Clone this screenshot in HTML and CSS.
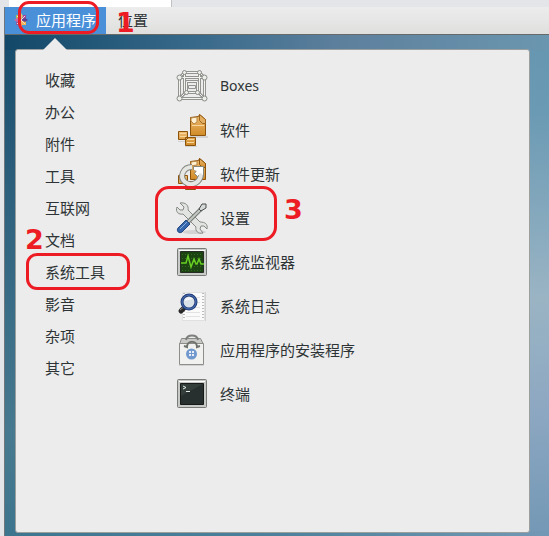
FILE: index.html
```
<!DOCTYPE html>
<html lang="zh-CN">
<head>
<meta charset="utf-8">
<title>应用程序</title>
<link rel="stylesheet" href="styles.css">
</head>
<body>
<div class="tabs"><div class="tab"></div></div>
<div class="desktop">
  <header class="topbar">
    <button class="menu menu-active marked" type="button">
      <svg class="logo" viewBox="0 0 14 14" aria-hidden="true">
        <path fill="#a9bc57" d="M2 2h5v5H2z"/><path fill="#a0479b" d="M7 2h5v5H7z"/>
        <path fill="#f3b64c" d="M7 7h5v5H7z"/><path fill="#8d5a9f" d="M2 7h5v5H2z"/>
        <path fill="#cfd27d" d="M7 0l2 3-2 4-2-4z"/><path fill="#c66aa4" d="M0 7l3-2 4 2-4 2z"/>
        <path fill="#5b418f" d="M14 7l-3-2-4 2 4 2z"/><path fill="#efb565" d="M7 14l2-3-2-4-2 4z"/>
        <path stroke="#e9d9dc" d="M3 3l8 8M11 3l-8 8"/>
      </svg>
      <span>应用程序</span>
      <span class="frame frame-one"></span>
    </button>
    <button class="menu places marked" type="button">位置<b class="number number-one">1</b></button>
  </header>
  <main class="panel">
    <nav class="categories">
      <button type="button">收藏</button>
      <button type="button">办公</button>
      <button type="button">附件</button>
      <button type="button">工具</button>
      <button type="button">互联网</button>
      <button type="button">文档</button>
      <button class="marked" type="button">系统工具<span class="frame frame-two"></span><b class="number number-two">2</b></button>
      <button type="button">影音</button>
      <button type="button">杂项</button>
      <button type="button">其它</button>
    </nav>
    <section class="apps">
      <button class="latin" type="button">
        <svg viewBox="0 0 32 32" aria-hidden="true">
          <g fill="none" stroke="#92958f" stroke-width="3"><path d="M3.500 7.500h25v21h-25zM8.500 2.500h15M3.500 7.500l5-5M28.500 7.500l-5-5M3.500 28.500l6-6M28.500 28.500l-6-6M10.500 11.500h11v11h-11zM8.500 3v20M23.500 3v20"/></g>
          <g fill="none" stroke="#f2f3f0" stroke-width="1"><path d="M3.500 7.500h25v21h-25zM8.500 2.500h15M3.500 7.500l5-5M28.500 7.500l-5-5M3.500 28.500l6-6M28.500 28.500l-6-6M10.500 11.500h11v11h-11zM8.500 3v20M23.500 3v20"/></g>
          <path d="M12.500 15.500h7v3h-7z" fill="#eee" stroke="#92958f"/>
          <g fill="#eceee9" stroke="#898c86"><circle cx="3.500" cy="7.500" r="2.500"/><circle cx="28.500" cy="7.500" r="2.500"/><circle cx="3.500" cy="28.500" r="2.500"/><circle cx="28.500" cy="28.500" r="2.500"/><circle cx="8.500" cy="2.500" r="2"/><circle cx="23.500" cy="2.500" r="2"/><circle cx="10.500" cy="22.500" r="2"/><circle cx="21.500" cy="22.500" r="2"/></g>
        </svg>Boxes
      </button>
      <button type="button">
        <svg viewBox="0 0 32 32" aria-hidden="true">
          <defs><linearGradient id="gold" x2="0" y2="1"><stop stop-color="#efbd73"/><stop offset="1" stop-color="#d18b28"/></linearGradient></defs>
          <path fill="#d2d2d2" d="M14 22h18v2H14zM2 27h8v1H2zM9 33h12v-1H9z"/>
          <g stroke="#8b530b" fill="url(#gold)"><path d="M14.500 3.500l8-1 1-2 6 5v16h-15z"/><path d="M2.500 17.500h9v8h-9zM9.500 23.500h10v8h-10z"/></g>
          <path fill="#fff0d1" stroke="#b78543" d="M15 4l6-1v5l-3 2-3-3z"/><path fill="#e3ae61" stroke="#9b641d" d="M23.500 0.500l6 5v4h-3l-3-3z"/>
          <path stroke="#f9d69e" d="M16 11.500h12M4 19.500h6M4 22.500h6M11 25.500h7M11 28.500h7"/>
        </svg>软件
      </button>
      <button type="button">
        <svg viewBox="0 0 32 32" aria-hidden="true">
          <g stroke="#8b530b" fill="url(#gold)"><path d="M14.500 3.500l8-1 1-2 6 5v16h-15z"/><path d="M2.500 17.500h9v8h-9zM9.500 23.500h10v8h-10z"/><path d="M23.500 0.500l6 5v4h-3l-3-3z"/></g>
          <path fill="#fff0d1" stroke="#b78543" d="M15 4l6-1v4l-6 1z"/>
          <path fill="none" stroke="#85877f" stroke-width="6" d="M16 9c-9 0-13 10-7 15s16 1 16-9"/>
          <path fill="#fff" stroke="#85877f" d="M17.500 8.500h10v10l-3-3-3 3-3-3 2-3-3-1z"/>
          <path fill="none" stroke="#e6e7e3" stroke-width="4" d="M16 9c-9 0-13 10-7 15s16 1 16-9"/>
          <path fill="#fff" d="M18 9h9v8l-2-2-3 1-1-3-3-1z"/>
        </svg>软件更新
      </button>
      <button class="marked" type="button">
        <svg viewBox="0 0 32 32" aria-hidden="true">
          <ellipse cx="18" cy="30" rx="12" ry="2" fill="#d3d3d3"/>
          <path fill="#e2e4e1" stroke="#858984" d="M4 1l4 4-1 3-3 0-3-3c-2 5 2 8 6 7l13 13c-1 4 2 7 7 6l-3-4 1-3 3 0 3 3c1-5-2-7-7-7L12 8c1-4-2-8-8-7z"/>
          <path stroke="#747873" stroke-width="4" d="M12 20L25 7"/><path stroke="#c4c8c5" stroke-width="2" d="M12 20L25 7"/>
          <path fill="#d5d9d7" stroke="#484c4b" d="M23 7l3-5 4 0v4l-5 3z"/>
          <path fill="#3566ab" stroke="#234781" d="M10 18l4 4-8 8c-3 2-6-1-4-4z"/><path stroke="#87afe0" stroke-width="1" d="M4 27l7-7"/>
        </svg>设置
        <span class="frame frame-three"></span><b class="number number-three">3</b>
      </button>
      <button type="button">
        <svg viewBox="0 0 32 32" aria-hidden="true">
          <rect x="1.500" y="2.500" width="29" height="27" rx="1" fill="#c9cbc9" stroke="#777a77"/><path stroke="#fff" d="M3 4.500h26"/>
          <path fill="#1b4412" stroke="#242c23" d="M4.500 5.500h23v21h-23z"/>
          <path fill="none" stroke="#356622" stroke-dasharray="1 2" d="M6 8.500h20M6 12.500h20M6 20.500h20M6 24.500h20"/>
          <path fill="none" stroke="#68ce24" stroke-width="1.500" d="M5 17h5l2-7 3 11 3-8 2 5h1l2-5 2 5h3"/>
        </svg>系统监视器
      </button>
      <button type="button">
        <svg viewBox="0 0 32 32" aria-hidden="true">
          <path fill="#d2d2d2" d="M29 2h1v29h-1z"/><path fill="#fafafa" stroke="#e0e0e0" d="M6.500 2.500h22v28h-22z"/><path stroke="#bbb" stroke-width="2" stroke-dasharray="1 2" d="M8 3v27M27 3v27"/>
          <path stroke="#e2e2e2" d="M10 7.500h14M10 12.500h14M10 17.500h14M10 22.500h14M10 26.500h14"/>
          <path stroke="#272827" stroke-width="5" stroke-linecap="round" d="M5 21l4-4"/><path stroke="#888" d="M4 20l5-4"/>
          <circle cx="13" cy="12" r="7" fill="#d9e0e8" stroke="#213b78" stroke-width="3"/><circle cx="13" cy="12" r="7" fill="none" stroke="#4e75b7"/><path fill="#fff" opacity=".7" d="M9 11c0-4 5-5 8-2z"/>
        </svg>系统日志
      </button>
      <button type="button">
        <svg viewBox="0 0 32 32" aria-hidden="true">
          <path fill="#d2d2d2" d="M3 31h25v1H3z"/><path fill="#c9cac7" stroke="#898c87" d="M5.500 4.500h19l3 6h-24z"/><path fill="none" stroke="#7d807c" stroke-width="2" d="M10 6c1-6 11-6 12 0"/>
          <path fill="#f1f2ef" stroke="#8c8f89" d="M3.500 9.500h24v21h-24z"/>
          <path fill="none" stroke="#70746e" stroke-width="2" d="M8 12l3 1c0-7 10-7 10 0l3-1"/>
          <circle cx="15.500" cy="20" r="5.500" fill="#7199ce"/><path fill="#e7eef7" d="M13 17h2v2h-2zM16 17h2v2h-2zM13 20h2v2h-2zM16 20h2v2h-2z"/>
        </svg>应用程序的安装程序
      </button>
      <button type="button">
        <svg viewBox="0 0 32 32" aria-hidden="true">
          <rect x="1.500" y="1.500" width="29" height="28" rx="1" fill="#c7c9c7" stroke="#777a77"/><path stroke="#fff" d="M3 3.500h26"/>
          <path fill="#27302e" stroke="#161b1a" d="M4.500 5.500h23v21h-23z"/><path fill="#343f3c" d="M5 6h22L5 18z"/>
          <path fill="none" stroke="#e5ebe8" d="M7 8l3 1.500-3 1.500M10 13.500h4"/>
        </svg>终端
      </button>
    </section>
  </main>
</div>
</body>
</html>
```
FILE: styles.css
```
* { box-sizing: border-box; }

body {
  margin: 0;
  min-height: 100vh;
  display: flex;
  flex-direction: column;
  background: #e3e5e8;
  color: #2e3436;
  font: 15px/20px "Noto Sans", "Noto Sans CJK SC", sans-serif;
}

button {
  border: 0;
  padding: 0;
  background: none;
  color: inherit;
  font: inherit;
  text-align: left;
  white-space: nowrap;
}

.tabs { display: flex; height: 7px; padding-left: 9px; }
.tab { width: 163px; background: #fff; border-right: 1px solid #c0c1c3; }

.desktop {
  flex: 1;
  display: flex;
  flex-direction: column;
  margin-left: 4px;
  border-left: 1px solid #6e777c;
  background:
    linear-gradient(90deg, #134869, #346788 32%, #5d809d 62%, #6b96b0) top / 100% 43px no-repeat,
    linear-gradient(90deg, #3d758e, #4d819b 50%, #7398b5) bottom / 100% 5px no-repeat,
    linear-gradient(#134869, #2d607d 35%, #477a90 80%, #3d758e) left / 50% 100% no-repeat,
    linear-gradient(#6596ae, #6b9ab4 20%, #9ab4c4 55%, #8ea8c2 75%, #7398b5) right / 50% 100% no-repeat;
}

.topbar {
  display: flex;
  height: 28px;
  background: linear-gradient(#ececec, #dfe0de);
  border-bottom: 1px solid #666a69;
}

.menu { display: flex; align-items: center; padding: 0 12px 2px; }
.menu-active { padding: 0 10px 2px 9px; gap: 8px; background: #4a90d9; color: #fff; }
.logo { width: 14px; height: 14px; }

.panel {
  position: relative;
  flex: 1;
  display: flex;
  margin: 14px 19px 3px 10px;
  padding: 14px 0;
  background: #ececec;
  border: 1px solid #9ba09f;
  border-radius: 3px;
}

.panel::before {
  content: "";
  position: absolute;
  left: 27px;
  top: -12px;
  width: 24px;
  height: 12px;
  background: #ececec;
  clip-path: polygon(50% 0, 100% 100%, 0 100%);
}

.categories { display: flex; flex-direction: column; width: 160px; padding-left: 29px; }
.categories button { height: 32px; }

.apps { display: flex; flex-direction: column; align-items: flex-start; }
.apps button { display: flex; align-items: center; gap: 12px; height: 44px; }
.apps .latin { font-size: 14px; }
.apps svg { width: 32px; height: 32px; overflow: visible; }

.marked { position: relative; }

.frame {
  position: absolute;
  border: 3px solid #ed1c24;
  border-radius: 11px;
  pointer-events: none;
}
.frame-one { left: 13px; top: -6px; width: 81px; height: 33px; z-index: 2; }
.frame-two { left: -19px; top: -3px; width: 104px; height: 37px; }
.frame-three { left: -21px; top: -10px; width: 122px; height: 55px; border-radius: 14px; }

.number {
  position: absolute;
  color: #ed1c24;
  font: bold 27px/27px "DejaVu Sans", sans-serif;
}
.number-one { left: 10px; top: 2px; }
.number-two { left: -20px; top: -30px; }
.number-three { left: 108px; top: 0; }
```
